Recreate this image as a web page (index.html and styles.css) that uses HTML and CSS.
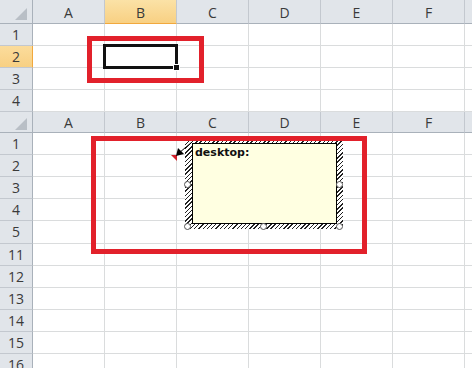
FILE: index.html
```html
<!DOCTYPE html>
<html lang="en">
<head>
    <meta charset="UTF-8">
    <title>Sheet comment</title>
    <link rel="stylesheet" href="styles.css">
</head>
<body>
    <div class="sheet">
        <!-- first view: plain selection -->
        <div class="grid grid-top">
            <div class="corner"><span class="tri"></span></div>
            <div class="col">A</div><div class="col on">B</div><div class="col">C</div><div class="col">D</div><div class="col">E</div><div class="col">F</div><div class="col"></div>

            <div class="rh">1</div><div></div><div></div><div></div><div></div><div></div><div></div><div></div>
            <div class="rh on">2</div><div></div><div></div><div></div><div></div><div></div><div></div><div></div>
            <div class="rh">3</div><div></div><div></div><div></div><div></div><div></div><div></div><div></div>
            <div class="rh">4</div><div></div><div></div><div></div><div></div><div></div><div></div><div></div>
        </div>

        <!-- second view: cell with comment -->
        <div class="grid grid-bottom">
            <div class="corner"><span class="tri"></span></div>
            <div class="col">A</div><div class="col">B</div><div class="col">C</div><div class="col">D</div><div class="col">E</div><div class="col">F</div><div class="col"></div>

            <div class="rh">1</div><div></div><div></div><div></div><div></div><div></div><div></div><div></div>
            <div class="rh">2</div><div></div><div></div><div></div><div></div><div></div><div></div><div></div>
            <div class="rh">3</div><div></div><div></div><div></div><div></div><div></div><div></div><div></div>
            <div class="rh">4</div><div></div><div></div><div></div><div></div><div></div><div></div><div></div>
            <div class="rh">5</div><div></div><div></div><div></div><div></div><div></div><div></div><div></div>
            <div class="rh">11</div><div></div><div></div><div></div><div></div><div></div><div></div><div></div>
            <div class="rh">12</div><div></div><div></div><div></div><div></div><div></div><div></div><div></div>
            <div class="rh">13</div><div></div><div></div><div></div><div></div><div></div><div></div><div></div>
            <div class="rh">14</div><div></div><div></div><div></div><div></div><div></div><div></div><div></div>
            <div class="rh">15</div><div></div><div></div><div></div><div></div><div></div><div></div><div></div>
            <div class="rh">16</div><div></div><div></div><div></div><div></div><div></div><div></div><div></div>
        </div>

        <!-- overlays -->
        <div class="selection"><span class="handle"></span></div>
        <div class="mark mark-top"></div>

        <div class="note">
            <div class="note-body">desktop:</div>
            <span class="knob k-lm"></span>
            <span class="knob k-bl"></span>
            <span class="knob k-bm"></span>
            <span class="knob k-br"></span>
            <span class="knob k-rm"></span>
        </div>

        <svg class="pointer" width="40" height="30" viewBox="160 135 40 30">
            <polygon points="171,155 177,155 177,161" fill="#d0202a"/>
            <line x1="192" y1="142" x2="179" y2="153" stroke="#000" stroke-width="1"/>
            <polygon points="176,156 178,148 184,154" fill="#000"/>
        </svg>

        <div class="mark mark-bottom"></div>
    </div>
</body>
</html>
```

FILE: styles.css
```css
body {
    margin: 0;
    background: #fff;
}

.sheet {
    position: relative;
    width: 472px;
    height: 368px;
    overflow: hidden;
    font-family: "Open Sans", Arial, sans-serif;
    font-size: 14px;
    color: #3a3a3a;
}

.grid {
    display: grid;
    grid-template-columns: 33px repeat(7, 72px);
}

.grid-top {
    grid-template-rows: 24px repeat(4, 22px);
}

/* row 5 is a pixel taller: rows 6-10 are hidden under its edge */
.grid-bottom {
    grid-template-rows: 21px repeat(4, 22px) 23px repeat(6, 22px);
}

.grid > div {
    box-sizing: border-box;
    border-right: 1px solid #dadcdd;
    border-bottom: 1px solid #dadcdd;
}

/* headers */
.col,
.rh,
.corner {
    background: #e1e5ea;
    display: flex;
    align-items: center;
    justify-content: center;
    line-height: 1;
}

.grid > .col {
    border-right-color: #c3c8cf;
    border-bottom-color: #a9b1ba;
    padding-top: 2px;
}

.grid > .rh {
    border-right-color: #a9b1ba;
    border-bottom-color: #c3c8cf;
}

.grid > .corner {
    justify-content: flex-end;
    align-items: flex-end;
    padding: 0 5px 3px 0;
    border-right-color: #a9b1ba;
    border-bottom-color: #a9b1ba;
}

.grid-bottom > .corner {
    padding-bottom: 2px;
}

.tri {
    width: 0;
    height: 0;
    border-left: 12px solid transparent;
    border-bottom: 12px solid #b9bfc6;
}

.grid > .col.on {
    background: linear-gradient(#fbe2a6, #f8d083);
    border-bottom-color: #f1a83d;
}

.grid > .rh.on {
    background: linear-gradient(#fbdc9c, #f8d083);
    border-right-color: #f1a83d;
}

/* active cell */
.selection {
    position: absolute;
    left: 103px;
    top: 44px;
    width: 75px;
    height: 25px;
    box-sizing: border-box;
    border: 3px solid #111;
}

.handle {
    position: absolute;
    right: -5px;
    bottom: -5px;
    width: 5px;
    height: 5px;
    background: #111;
    border: 1px solid #fff;
}

/* red callout frames */
.mark {
    position: absolute;
    box-sizing: border-box;
    border: 5px solid #e2212b;
}

.mark-top {
    left: 87px;
    top: 36px;
    width: 117px;
    height: 47px;
}

.mark-bottom {
    left: 91px;
    top: 136px;
    width: 276px;
    height: 118px;
}

/* comment box */
.note {
    position: absolute;
    left: 185px;
    top: 140px;
    width: 158px;
    height: 89px;
    box-sizing: border-box;
    padding: 3px 6px 5px 7px;
    display: flex;
    background: repeating-linear-gradient(135deg, #222 0 1px, #fff 1px 3px);
}

.note-body {
    flex: 1;
    background: #ffffe1;
    border: 1px solid #000;
    padding: 2px 2px 0;
    font-family: "DejaVu Sans", Tahoma, sans-serif;
    font-size: 11px;
    font-weight: bold;
    color: #111;
}

.knob {
    position: absolute;
    width: 5px;
    height: 5px;
    border: 1px solid #555;
    border-radius: 50%;
    background: #fff;
}

.k-lm { left: -1px; top: 41px; }
.k-bl { left: -1px; top: 83px; }
.k-bm { left: 75px; top: 83px; }
.k-br { left: 151px; top: 83px; }
.k-rm { left: 151px; top: 41px; }

.pointer {
    position: absolute;
    left: 160px;
    top: 135px;
}
```
